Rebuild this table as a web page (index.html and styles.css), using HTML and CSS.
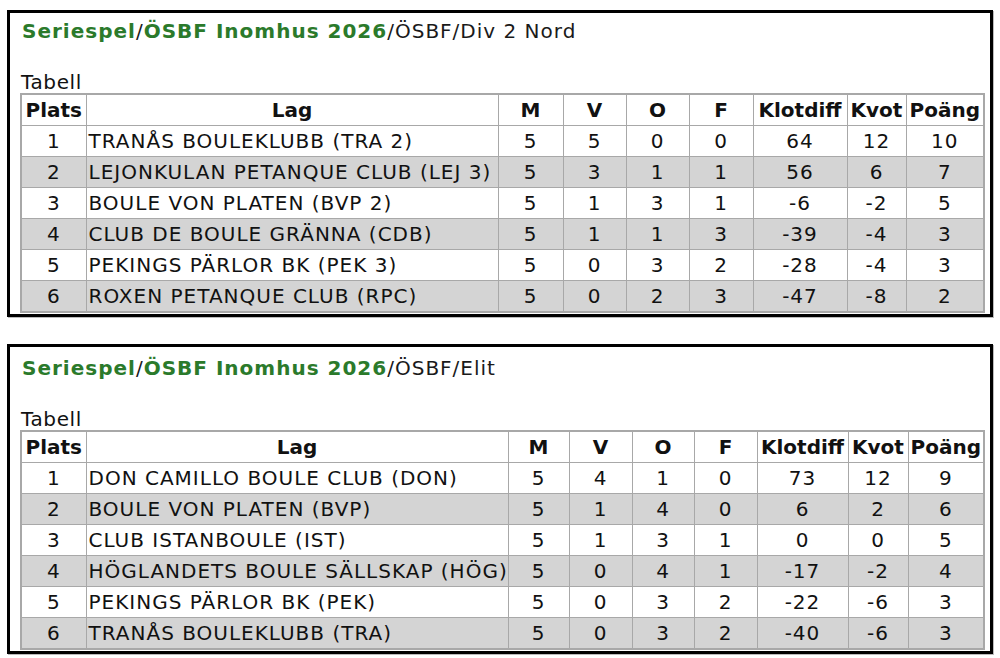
FILE: index.html
```html
<!DOCTYPE html>
<html lang="sv">
<head>
<meta charset="utf-8">
<title>Seriespel</title>
<link rel="stylesheet" href="styles.css">
</head>
<body>
<section class="box">
  <h2 class="path"><a class="lnk">Seriespel</a>/<a class="lnk">ÖSBF Inomhus 2026</a>/ÖSBF/Div 2 Nord</h2>
  <div class="cap">Tabell</div>
  <table class="tbl t1">
    <colgroup><col class="c-plats"><col class="c-lag"><col class="c-m"><col class="c-v"><col class="c-o"><col class="c-f"><col class="c-kd"><col class="c-kv"><col class="c-p"></colgroup>
    <thead><tr><th>Plats</th><th>Lag</th><th>M</th><th>V</th><th>O</th><th>F</th><th>Klotdiff</th><th>Kvot</th><th>Poäng</th></tr></thead>
    <tbody>
      <tr><td>1</td><td class="lag">TRANÅS BOULEKLUBB (TRA 2)</td><td>5</td><td>5</td><td>0</td><td>0</td><td>64</td><td>12</td><td>10</td></tr>
      <tr class="alt"><td>2</td><td class="lag">LEJONKULAN PETANQUE CLUB (LEJ 3)</td><td>5</td><td>3</td><td>1</td><td>1</td><td>56</td><td>6</td><td>7</td></tr>
      <tr><td>3</td><td class="lag">BOULE VON PLATEN (BVP 2)</td><td>5</td><td>1</td><td>3</td><td>1</td><td>-6</td><td>-2</td><td>5</td></tr>
      <tr class="alt"><td>4</td><td class="lag">CLUB DE BOULE GRÄNNA (CDB)</td><td>5</td><td>1</td><td>1</td><td>3</td><td>-39</td><td>-4</td><td>3</td></tr>
      <tr><td>5</td><td class="lag">PEKINGS PÄRLOR BK (PEK 3)</td><td>5</td><td>0</td><td>3</td><td>2</td><td>-28</td><td>-4</td><td>3</td></tr>
      <tr class="alt"><td>6</td><td class="lag">ROXEN PETANQUE CLUB (RPC)</td><td>5</td><td>0</td><td>2</td><td>3</td><td>-47</td><td>-8</td><td>2</td></tr>
    </tbody>
  </table>
</section>
<section class="box box-second">
  <h2 class="path"><a class="lnk">Seriespel</a>/<a class="lnk">ÖSBF Inomhus 2026</a>/ÖSBF/Elit</h2>
  <div class="cap">Tabell</div>
  <table class="tbl t2">
    <colgroup><col class="c-plats"><col class="c-lag"><col class="c-m"><col class="c-v"><col class="c-o"><col class="c-f"><col class="c-kd"><col class="c-kv"><col class="c-p"></colgroup>
    <thead><tr><th>Plats</th><th>Lag</th><th>M</th><th>V</th><th>O</th><th>F</th><th>Klotdiff</th><th>Kvot</th><th>Poäng</th></tr></thead>
    <tbody>
      <tr><td>1</td><td class="lag">DON CAMILLO BOULE CLUB (DON)</td><td>5</td><td>4</td><td>1</td><td>0</td><td>73</td><td>12</td><td>9</td></tr>
      <tr class="alt"><td>2</td><td class="lag">BOULE VON PLATEN (BVP)</td><td>5</td><td>1</td><td>4</td><td>0</td><td>6</td><td>2</td><td>6</td></tr>
      <tr><td>3</td><td class="lag">CLUB ISTANBOULE (IST)</td><td>5</td><td>1</td><td>3</td><td>1</td><td>0</td><td>0</td><td>5</td></tr>
      <tr class="alt"><td>4</td><td class="lag">HÖGLANDETS BOULE SÄLLSKAP (HÖG)</td><td>5</td><td>0</td><td>4</td><td>1</td><td>-17</td><td>-2</td><td>4</td></tr>
      <tr><td>5</td><td class="lag">PEKINGS PÄRLOR BK (PEK)</td><td>5</td><td>0</td><td>3</td><td>2</td><td>-22</td><td>-6</td><td>3</td></tr>
      <tr class="alt"><td>6</td><td class="lag">TRANÅS BOULEKLUBB (TRA)</td><td>5</td><td>0</td><td>3</td><td>2</td><td>-40</td><td>-6</td><td>3</td></tr>
    </tbody>
  </table>
</section>
</body>
</html>
```
FILE: styles.css
```css
html, body {
  margin: 0;
  padding: 0;
  background: #ffffff;
}
body {
  padding-top: 10px;
  font-family: "DejaVu Sans", Verdana, sans-serif;
  color: #111;
}
.box {
  box-sizing: border-box;
  width: 986px;
  margin: 0 0 27px 7px;
  border: 3px solid #000;
  box-shadow: 1px 1px 0 #bbb;
  padding: 5px 7px 1px 10px;
  background: #fff;
}
.box-second {
  padding-top: 8px;
}
.path {
  margin: 0 0 0 2px;
  font-size: 20px;
  font-weight: normal;
  line-height: 26px;
  letter-spacing: 1px;
  color: #1a1a1a;
}
.lnk {
  color: #2b7a2b;
  font-weight: bold;
  letter-spacing: 1px;
}
.cap {
  margin-top: 27px;
  font-size: 20px;
  line-height: 22px;
  letter-spacing: 0.6px;
  padding-left: 1px;
}
.tbl {
  width: 963px;
  table-layout: fixed;
  border-collapse: collapse;
  border: 2px solid #a8a8a8;
  font-size: 20px;
  letter-spacing: 1px;
}
.tbl th, .tbl td {
  border: 1px solid #a8a8a8;
  padding: 0 2px;
  height: 30px;
  text-align: center;
  white-space: nowrap;
  overflow: hidden;
}
.tbl th {
  font-weight: bold;
  letter-spacing: 0;
}
.tbl td.lag {
  text-align: left;
  padding-left: 2px;
}
.tbl tr.alt td {
  background: #d4d4d4;
}
.t1 .c-plats { width: 65px; }
.t1 .c-lag { width: 412px; }
.t1 .c-m { width: 65px; }
.t1 .c-v { width: 63px; }
.t1 .c-o { width: 63px; }
.t1 .c-f { width: 64px; }
.t1 .c-kd { width: 94px; }
.t1 .c-kv { width: 59px; }
.t1 .c-p { width: 78px; }
.t2 .c-plats { width: 65px; }
.t2 .c-lag { width: 422px; }
.t2 .c-m { width: 61px; }
.t2 .c-v { width: 63px; }
.t2 .c-o { width: 62px; }
.t2 .c-f { width: 63px; }
.t2 .c-kd { width: 91px; }
.t2 .c-kv { width: 60px; }
.t2 .c-p { width: 76px; }
```
